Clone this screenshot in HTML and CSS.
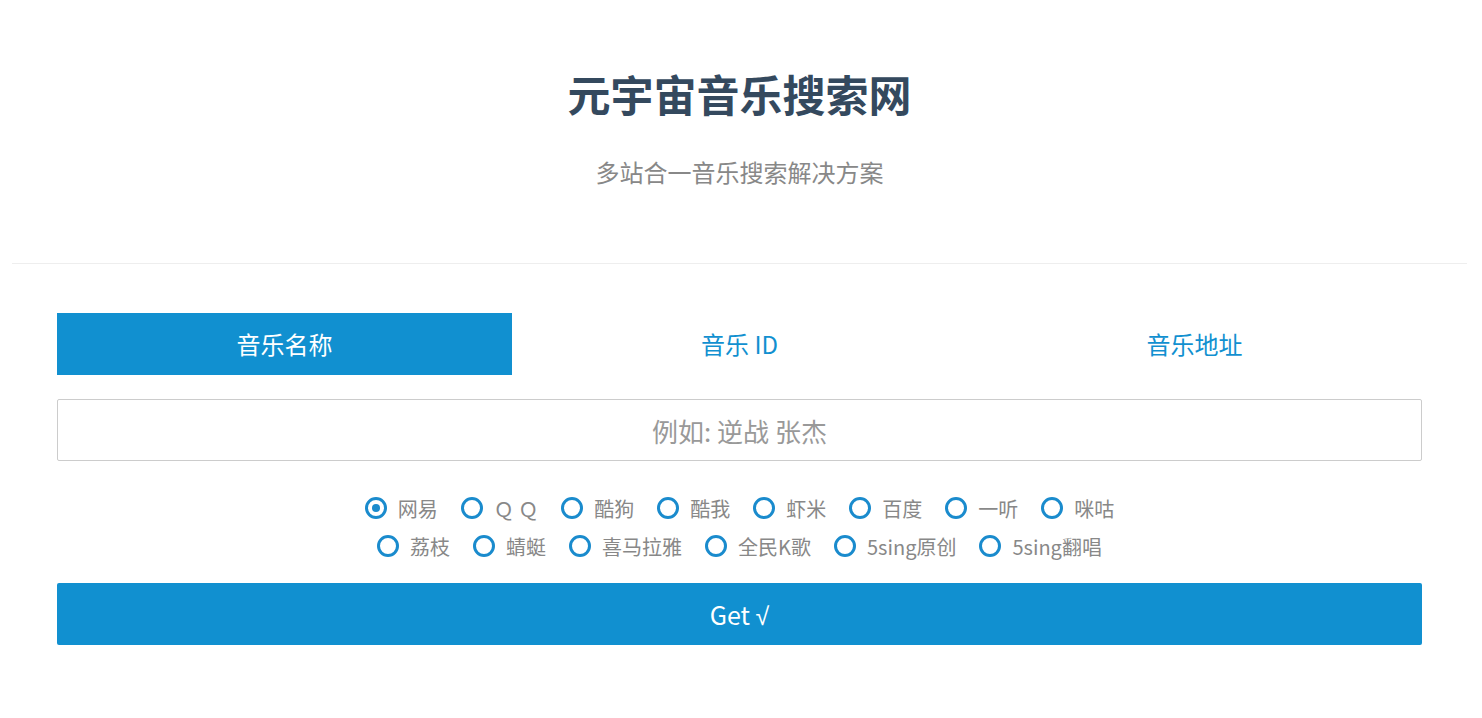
FILE: index.html
```html
<!DOCTYPE html>
<html lang="zh-CN">
<head>
<meta charset="utf-8">
<title>元宇宙音乐搜索网</title>
<link rel="stylesheet" href="styles.css">
</head>
<body>
<header class="header">
  <h1 class="title">元宇宙音乐搜索网</h1>
  <p class="subtitle">多站合一音乐搜索解决方案</p>
</header>
<main class="main">
  <div class="tabs">
    <div class="tab active">音乐名称</div>
    <div class="tab">音乐 ID</div>
    <div class="tab">音乐地址</div>
  </div>
  <input class="search" type="text" placeholder="例如: 逆战 张杰">
  <div class="sources">
    <div class="row">
      <label class="opt"><span class="dot checked"></span>网易</label>
      <label class="opt"><span class="dot"></span>Ｑ Ｑ</label>
      <label class="opt"><span class="dot"></span>酷狗</label>
      <label class="opt"><span class="dot"></span>酷我</label>
      <label class="opt"><span class="dot"></span>虾米</label>
      <label class="opt"><span class="dot"></span>百度</label>
      <label class="opt"><span class="dot"></span>一听</label>
      <label class="opt"><span class="dot"></span>咪咕</label>
    </div>
    <div class="row">
      <label class="opt"><span class="dot"></span>荔枝</label>
      <label class="opt"><span class="dot"></span>蜻蜓</label>
      <label class="opt"><span class="dot"></span>喜马拉雅</label>
      <label class="opt"><span class="dot"></span>全民K歌</label>
      <label class="opt"><span class="dot"></span>5sing原创</label>
      <label class="opt"><span class="dot"></span>5sing翻唱</label>
    </div>
  </div>
  <button class="get">Get <span class="check">√</span></button>
</main>
</body>
</html>
```
FILE: styles.css
```css
* { box-sizing: border-box; }
body {
  margin: 0;
  font-family: "Noto Sans CJK SC", "Open Sans", "Liberation Sans", sans-serif;
  background: #fff;
}
.header {
  margin: 0 15px 0 12px;
  padding: 65px 0 75px;
  border-bottom: 1px solid #eeeeee;
  text-align: center;
}
.title {
  margin: 0;
  font-size: 43px;
  line-height: 56px;
  font-weight: 700;
  color: #34495e;
}
.subtitle {
  margin: 35px 0 0;
  font-size: 24px;
  line-height: 32px;
  color: #888888;
}
.main {
  margin: 49px 60px 0 57px;
}
.tabs {
  display: grid;
  grid-template-columns: repeat(3, 1fr);
}
.tab {
  height: 62px;
  line-height: 62px;
  text-align: center;
  font-size: 24px;
  color: #1190d0;
}
.tab.active {
  background: #1190d0;
  color: #fff;
}
.search {
  display: block;
  width: 100%;
  height: 62px;
  margin-top: 24px;
  border: 1px solid #cccccc;
  border-radius: 2px;
  font-family: inherit;
  font-size: 26px;
  text-align: center;
  color: #555;
  outline: none;
}
.search::placeholder { color: #999999; }
.sources {
  margin-top: 28px;
}
.row {
  display: flex;
  justify-content: center;
  gap: 23px;
  height: 38px;
  align-items: center;
}
.opt {
  display: flex;
  align-items: center;
  gap: 11px;
  font-size: 20px;
  color: #888888;
}
.dot {
  width: 22px;
  height: 22px;
  border: 3px solid #1a8bcd;
  border-radius: 50%;
  display: flex;
  align-items: center;
  justify-content: center;
}
.dot.checked::after {
  content: "";
  width: 8px;
  height: 8px;
  border-radius: 50%;
  background: #1a8bcd;
}
.get {
  display: block;
  width: 100%;
  height: 62px;
  margin-top: 18px;
  border: none;
  border-radius: 2px;
  background: #1190d0;
  color: #fff;
  font-family: inherit;
  font-size: 25px;
}
.check {
  font-family: "Liberation Sans", sans-serif;
}
```
